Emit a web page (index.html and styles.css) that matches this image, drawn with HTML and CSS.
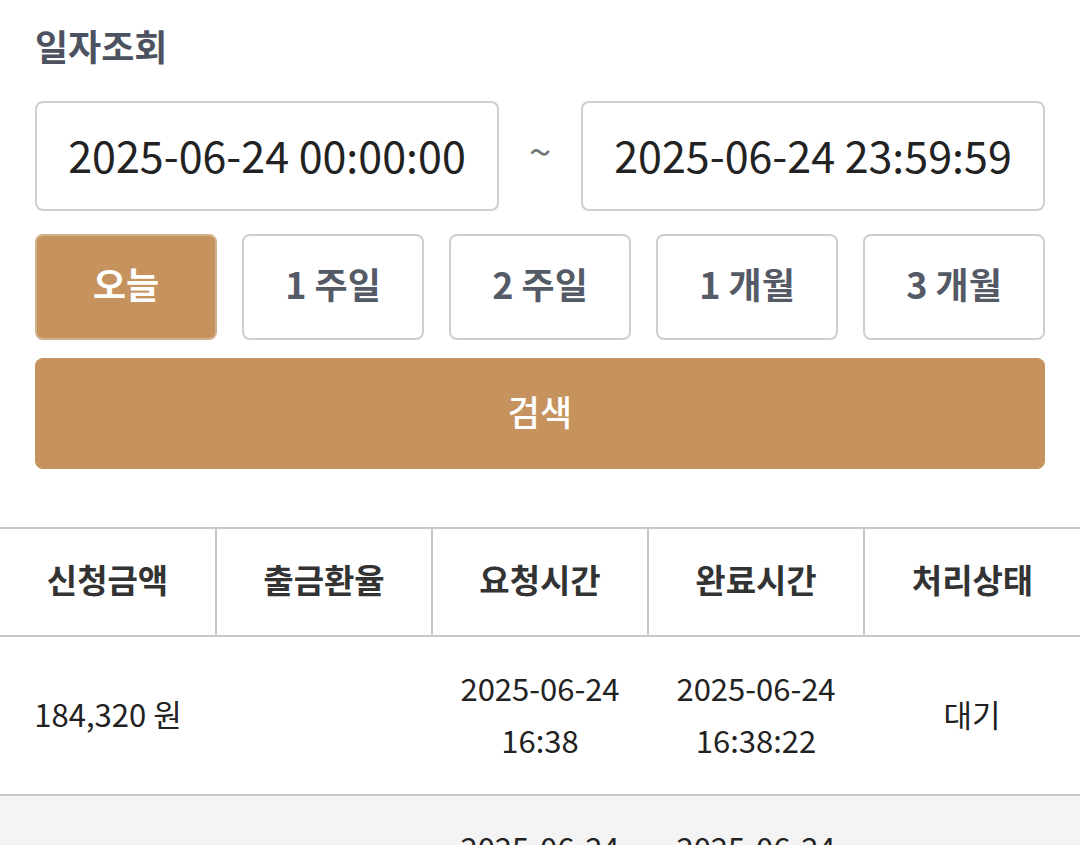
FILE: index.html
```html
<!DOCTYPE html>
<html>
<head>
    <link rel="stylesheet" href="styles.css">
</head>
<body>
    <div class="search">
        <h2 class="title">일자조회</h2>

        <div class="date-row">
            <div class="date-box">2025-06-24 00:00:00</div>
            <span class="tilde">~</span>
            <div class="date-box">2025-06-24 23:59:59</div>
        </div>

        <div class="range-row">
            <button class="range active">오늘</button>
            <button class="range">1 주일</button>
            <button class="range">2 주일</button>
            <button class="range">1 개월</button>
            <button class="range">3 개월</button>
        </div>

        <button class="search-button">검색</button>
    </div>

    <table class="list">
        <thead>
            <tr>
                <th>신청금액</th>
                <th>출금환율</th>
                <th>요청시간</th>
                <th>완료시간</th>
                <th>처리상태</th>
            </tr>
        </thead>
        <tbody>
            <tr>
                <td>184,320 원</td>
                <td></td>
                <td>2025-06-24<br>16:38</td>
                <td>2025-06-24<br>16:38:22</td>
                <td>대기</td>
            </tr>
            <tr class="alt">
                <td>184,320 원</td>
                <td></td>
                <td>2025-06-24<br>16:30</td>
                <td>2025-06-24<br>16:30:10</td>
                <td>대기</td>
            </tr>
        </tbody>
    </table>
</body>
</html>
```

FILE: styles.css
```css
body {
    margin: 0;
    background-color: white;
    font-family: "Noto Sans CJK KR", "Noto Sans", sans-serif;
    color: #222;
}

.search {
    padding: 20px 35px 0;
}

.title {
    margin: 0 0 31px;
    font-size: 36px;
    line-height: 50px;
    font-weight: 700;
    color: #4d5261;
}

.date-row {
    display: flex;
    align-items: center;
}

.date-box {
    flex: 1;
    height: 101px;
    padding-bottom: 5px;
    border: 2px solid #cfcfcf;
    border-radius: 8px;
    display: flex;
    align-items: center;
    justify-content: center;
    font-size: 43px;
    color: #222;
}

.tilde {
    width: 82px;
    text-align: center;
    font-size: 40px;
    color: #777;
    padding-bottom: 12px;
}

.range-row {
    display: flex;
    gap: 25px;
    margin-top: 23px;
}

.range {
    flex: 1;
    height: 106px;
    padding: 0 0 8px;
    border: 2px solid #cfcfcf;
    border-radius: 8px;
    background-color: white;
    font-family: inherit;
    font-size: 36px;
    font-weight: 700;
    color: #555a67;
}

.range.active {
    background-color: #c6935f;
    border-color: #d2b08c;
    color: white;
}

.search-button {
    display: block;
    width: 100%;
    height: 111px;
    margin-top: 18px;
    padding: 0 0 6px;
    border: none;
    border-radius: 8px;
    background-color: #c6935f;
    font-family: inherit;
    font-size: 35px;
    font-weight: 500;
    color: white;
}

.list {
    width: 100%;
    margin-top: 58px;
    border-collapse: collapse;
    table-layout: fixed;
}

.list th {
    height: 100px;
    padding: 0 0 6px;
    border-top: 2px solid #c8c8c8;
    border-bottom: 2px solid #c8c8c8;
    border-left: 2px solid #c8c8c8;
    font-size: 33px;
    font-weight: 700;
    color: #333;
}

.list th:first-child {
    border-left: none;
}

.list td {
    height: 153px;
    padding: 0 0 4px;
    border-bottom: 2px solid #c8c8c8;
    text-align: center;
    font-size: 31px;
    line-height: 52px;
    color: #222;
}

.list tr.alt td {
    background-color: #f4f4f4;
}
```
